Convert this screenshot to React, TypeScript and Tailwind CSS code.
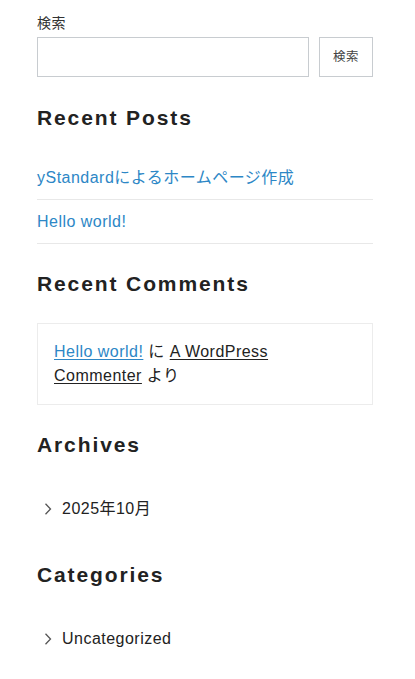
const font = {
  fontFamily: '"Liberation Sans", Arial, "Noto Sans CJK JP", sans-serif',
};

function Heading({ children }: { children: string }) {
  return (
    <h2 className="text-[21px] leading-[30px] font-bold tracking-[0.09em] text-[#222]">
      {children}
    </h2>
  );
}

function Chevron() {
  return (
    <svg width="8" height="12" viewBox="0 0 8 12" className="shrink-0">
      <polyline points="1.5,0.8 6.5,6 1.5,11.2" fill="none" stroke="#555" strokeWidth="1.3" />
    </svg>
  );
}

function ArchiveItem({ label }: { label: string }) {
  return (
    <div className="flex items-center gap-[10px] pl-[7px] leading-6 text-[#222]">
      <Chevron />
      <span>{label}</span>
    </div>
  );
}

export default function App() {
  const posts = ["yStandardによるホームページ作成", "Hello world!"];

  return (
    <div className="bg-white min-h-[679px] pl-[37px] pr-[42px] pt-[13px] text-[16px] tracking-[0.03em]" style={font}>
      <div>
        <label className="block text-[14px] leading-5 text-[#333] mb-1">検索</label>
        <div className="flex gap-[10px]">
          <input className="flex-1 h-10 border border-[#c8ccd0] bg-white outline-none" />
          <button className="w-[54px] h-10 border border-[#c8ccd0] bg-white text-[12.5px] text-[#444]">
            検索
          </button>
        </div>
      </div>

      <div className="mt-[26px]">
        <Heading>Recent Posts</Heading>
        <ul className="mt-[23px]">
          {posts.map((p) => (
            <li key={p} className="border-b border-[#e8e8e8] pt-[10px] pb-[9px] leading-6">
              <a className="text-[#2d87c6]">{p}</a>
            </li>
          ))}
        </ul>
      </div>

      <div className="mt-[25px]">
        <Heading>Recent Comments</Heading>
        <div className="mt-[24px] border border-[#ececec] p-4 leading-6 text-[#222]">
          <a className="text-[#2d87c6] underline underline-offset-2">Hello world!</a> に{" "}
          <a className="underline underline-offset-2">A WordPress Commenter</a> より
        </div>
      </div>

      <div className="mt-[25px]">
        <Heading>Archives</Heading>
        <div className="mt-[37px]">
          <ArchiveItem label="2025年10月" />
        </div>
      </div>

      <div className="mt-[39px]">
        <Heading>Categories</Heading>
        <div className="mt-[37px]">
          <ArchiveItem label="Uncategorized" />
        </div>
      </div>
    </div>
  );
}
